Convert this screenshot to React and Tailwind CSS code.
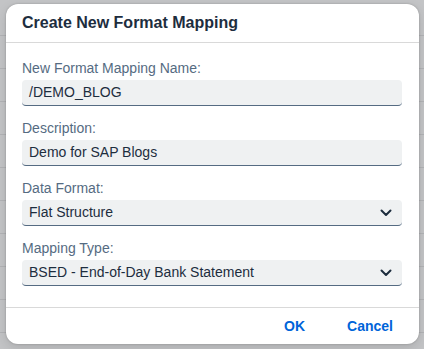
import React from 'react';

const fields = [
  { label: 'New Format Mapping Name:', value: '/DEMO_BLOG', select: false },
  { label: 'Description:', value: 'Demo for SAP Blogs', select: false },
  { label: 'Data Format:', value: 'Flat Structure', select: true },
  { label: 'Mapping Type:', value: 'BSED - End-of-Day Bank Statement', select: true },
];

const Chevron = () => (
  <svg width="12" height="8" viewBox="0 0 12 8" fill="none">
    <path d="M1.5 1.5L6 6L10.5 1.5" stroke="#1d2d3e" strokeWidth="2" strokeLinecap="round" strokeLinejoin="round" />
  </svg>
);

const App = () => {
  return (
    <div className="w-[424px] h-[349px] overflow-hidden bg-[#c3c4c6] bg-[repeating-linear-gradient(to_bottom,transparent_0px,transparent_32px,#b2b3b6_32px,#b2b3b6_33px)] bg-[position:0_3px] pt-[4px] pl-[6px] font-['Liberation_Sans',Arial,sans-serif]">
      <div className="w-[413px] h-[340px] bg-white rounded-[12px] shadow-[0_0_2px_rgba(0,0,0,0.25),0_4px_12px_rgba(0,0,0,0.12)] flex flex-col">
        <div className="h-[39px] flex items-center px-4 border-b border-[#d9d9d9]">
          <h2 className="text-[16px] font-bold text-[#1d2d3e]">Create New Format Mapping</h2>
        </div>

        <div className="flex-1 px-4 pt-[15px] flex flex-col gap-[12px]">
          {fields.map((f) => (
            <div key={f.label} className="flex flex-col">
              <label className="h-[20px] leading-[20px] text-[14px] text-[#556b82] mb-[2px]">{f.label}</label>
              <div className="h-[26px] w-[380px] bg-[#eff1f2] rounded-[4px] border-b border-[#556b82] flex items-center justify-between pl-[7px] pr-[6px]">
                <span className="text-[14px] text-[#1d2d3e]">{f.value}</span>
                {f.select && (
                  <span className="mr-[4px] flex items-center">
                    <Chevron />
                  </span>
                )}
              </div>
            </div>
          ))}
        </div>

        <div className="h-[37px] border-t border-[#d9d9d9] flex items-center justify-end gap-[42px] pr-[26px]">
          <button className="text-[14px] font-bold text-[#0064d9]">OK</button>
          <button className="text-[14px] font-bold text-[#0064d9]">Cancel</button>
        </div>
      </div>
    </div>
  );
};

export default App;
